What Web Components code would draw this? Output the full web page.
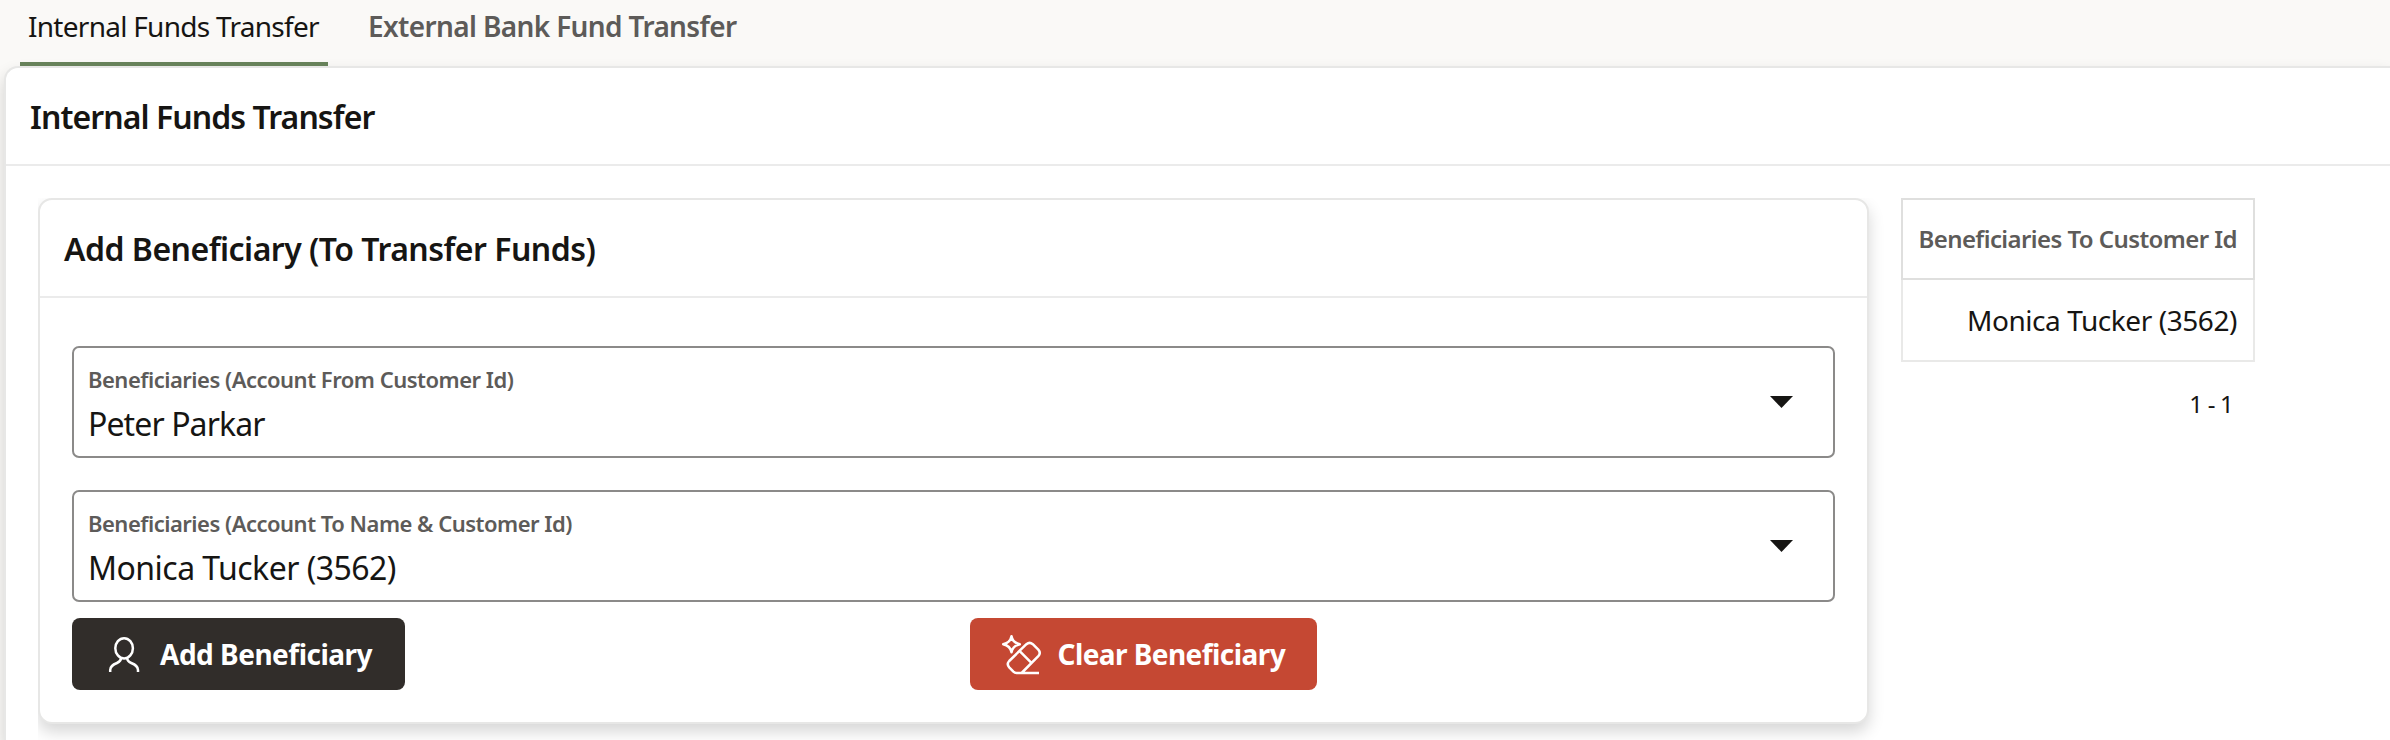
<!DOCTYPE html>
<html lang="en">
<head>
<meta charset="utf-8">
<title>Internal Funds Transfer</title>
<style>
body{margin:0;width:2390px;height:740px;overflow:hidden;background:#faf9f7;color:#161513;font-family:"Noto Sans","Open Sans",sans-serif}
main{display:grid;grid-template-columns:1831px 354px;column-gap:32px;padding:32px 0 0 32px;align-items:start}
bank-actions{margin-top:16px}
</style>
</head>
<body>
<bank-tabs>
  <bank-tab active style="letter-spacing:-.72px">Internal Funds Transfer</bank-tab>
  <bank-tab style="letter-spacing:-.64px">External Bank Fund Transfer</bank-tab>
</bank-tabs>
<bank-page heading="Internal Funds Transfer">
  <main>
    <bank-card heading="Add Beneficiary (To Transfer Funds)">
      <bank-select label="Beneficiaries (Account From Customer Id)" value="Peter Parkar" style="--vs:-.9px"></bank-select>
      <bank-select label="Beneficiaries (Account To Name &amp; Customer Id)" value="Monica Tucker (3562)" style="--vs:-.53px"></bank-select>
      <bank-actions>
        <bank-button style="width:333px;--pad:36px;--gap:20px;letter-spacing:-.5px">
          <svg slot="icon" width="32" height="37" viewBox="0 0 32 37" fill="none" stroke="#fff" stroke-width="2.5"><ellipse cx="16.1" cy="12.3" rx="8.800" ry="10.1"/><path d="M13 22c0 2.600-1.500 3.900-4 5C4.500 28.900 2.200 30.300 2.200 34v2M19.200 22c0 2.600 1.500 3.900 4 5 4.500 1.900 6.800 3.300 6.800 7v2"/></svg>
          Add Beneficiary</bank-button>
        <bank-button danger style="width:347px;--pad:31px;--gap:15.500px;letter-spacing:-.56px">
          <svg slot="icon" width="41" height="42" viewBox="0 0 41 42" fill="none" stroke="#fff" stroke-width="2.500" stroke-linejoin="round"><path d="M10.500 3.200Q11.700 9.700 18.800 11.200Q11.700 12.700 10.500 19.300Q9.300 12.700 2.200 11.200Q9.300 9.700 10.500 3.200Z"/><path d="M38 40H15.500Q13.700 40 12.400 38.700L8.200 34.300Q5.300 31 8.200 28L25.400 11.200Q28.600 8.600 31.800 11.200L37.300 16.700Q40.200 20 37.300 23.200L20.600 40M18.700 18.200L30.400 29.900"/></svg>
          Clear Beneficiary</bank-button>
      </bank-actions>
    </bank-card>
    <bank-report heading="Beneficiaries To Customer Id" range="1 - 1">Monica Tucker (3562)</bank-report>
  </main>
</bank-page>
<script>
function component(name, markup) {
  const template = document.createElement('template');
  template.innerHTML = markup;
  customElements.define(name, class extends HTMLElement {
    constructor() {
      super();
      this.attachShadow({mode: 'open'}).append(template.content.cloneNode(true));
    }
    connectedCallback() {
      for (const node of this.shadowRoot.querySelectorAll('[data-text]'))
        node.textContent = this.getAttribute(node.dataset.text);
    }
  });
}

component('bank-tabs', `<style>
:host{display:flex;gap:32px;padding-left:20px;height:66px}
</style><slot></slot>`);

component('bank-tab', `<style>
:host{display:block;box-sizing:border-box;height:66px;padding:0 8px;font-size:28px;line-height:53px;font-weight:600;color:#5d5b59;white-space:nowrap}
:host([active]){width:308px;font-weight:400;color:#161513;border-bottom:4px solid #67825a}
</style><slot></slot>`);

component('bank-page', `<style>
:host{display:block;box-sizing:border-box;margin-left:4px;width:2386px;height:674px;background:#fff;border:2px solid #e7e7e6;border-width:2px 0 0 2px;border-top-left-radius:14px;box-shadow:0 8px 16px rgba(0,0,0,.16)}
h1{margin:0;box-sizing:border-box;height:98px;padding-left:24px;border-bottom:2px solid #ebebeb;font-size:32px;line-height:97px;font-weight:600;letter-spacing:-.93px}
</style><h1 data-text="heading"></h1><slot></slot>`);

component('bank-card', `<style>
:host{display:block;clip-path:inset(0 -30px -16px 0)}
section{box-sizing:border-box;height:526px;background:#fff;border:2px solid #e7e7e6;border-radius:14px;box-shadow:0 8px 16px rgba(0,0,0,.16)}
h2{margin:0;box-sizing:border-box;height:98px;padding-left:24px;border-bottom:2px solid #ebebeb;font-size:32px;line-height:98px;font-weight:600;letter-spacing:-.52px}
.body{display:flex;flex-direction:column;padding:48px 32px 32px}
::slotted(bank-select:nth-of-type(2)){margin-top:32px}
</style><section><h2 data-text="heading"></h2><div class="body"><slot></slot></div></section>`);

component('bank-select', `<style>
:host{display:flex;justify-content:space-between;box-sizing:border-box;height:112px;padding:16px 40px 0 14px;border:2px solid #8b8a89;border-radius:7px}
label{display:block;font-size:22px;line-height:30px;font-weight:600;color:#5d5b59;letter-spacing:-.5px}
.value{margin-top:7px;font-size:32px;line-height:45px;letter-spacing:var(--vs)}
svg{display:block;margin-top:32px}
</style><div><label data-text="label"></label><div class="value" data-text="value"></div></div>
<svg width="23" height="12" viewBox="0 0 23 12"><path d="M0 0h23L11.500 12z" fill="#161513"/></svg>`);

component('bank-actions', `<style>
:host{display:grid;grid-template-columns:898px 1fr}
</style><slot></slot>`);

component('bank-button', `<style>
:host{display:flex;align-items:center;box-sizing:border-box;height:72px;padding-left:var(--pad);gap:var(--gap);border-radius:8px;background:#312d2a;color:#fff;font-size:28px;line-height:72px;font-weight:700;white-space:nowrap}
:host([danger]){background:#c54833}
</style><slot name="icon"></slot><span><slot></slot></span>`);

component('bank-report', `<style>
:host{display:block;text-align:right}
div{box-sizing:border-box;padding-right:16px;white-space:nowrap}
.head{height:82px;border:2px solid #dfdfde;font-size:24px;line-height:77px;font-weight:600;color:#5d5b59;letter-spacing:-.58px}
.cell{height:82px;border:2px solid #e9e9e8;border-top:0;font-size:28px;line-height:80px;letter-spacing:-.43px}
.range{margin-top:22px;padding-right:22px;font-size:24px;line-height:40px;letter-spacing:-.8px}
</style><div class="head" data-text="heading"></div><div class="cell"><slot></slot></div><div class="range" data-text="range"></div>`);
</script>
</body>
</html>
